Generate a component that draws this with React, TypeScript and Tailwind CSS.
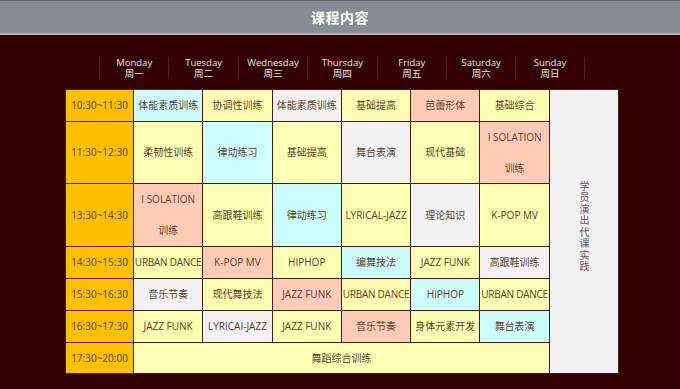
import React from "react";

const Y = "bg-[#ffffb3]";
const C = "bg-[#ccffff]";
const G = "bg-[#f2f2f2]";
const P = "bg-[#ffccb8]";

type Cell = { bg: string; text: React.ReactNode; tight?: boolean };

const days = [
  ["Monday", "周一"],
  ["Tuesday", "周二"],
  ["Wednesday", "周三"],
  ["Thursday", "周四"],
  ["Friday", "周五"],
  ["Saturday", "周六"],
  ["Sunday", "周日"],
];

const isolation = (
  <>
    I SOLATION
    <br />
    训练
  </>
);

const rows: { time: string; lead: string; cells: Cell[] }[] = [
  {
    time: "10:30~11:30",
    lead: "leading-[31px]",
    cells: [
      { bg: C, text: "体能素质训练" },
      { bg: Y, text: "协调性训练" },
      { bg: G, text: "体能素质训练" },
      { bg: Y, text: "基础提高" },
      { bg: P, text: "芭蕾形体" },
      { bg: Y, text: "基础综合" },
    ],
  },
  {
    time: "11:30~12:30",
    lead: "leading-[30.5px]",
    cells: [
      { bg: Y, text: "柔韧性训练" },
      { bg: C, text: "律动练习" },
      { bg: Y, text: "基础提高" },
      { bg: G, text: "舞台表演" },
      { bg: Y, text: "现代基础" },
      { bg: P, text: isolation },
    ],
  },
  {
    time: "13:30~14:30",
    lead: "leading-[31px]",
    cells: [
      { bg: P, text: isolation },
      { bg: Y, text: "高跟鞋训练" },
      { bg: C, text: "律动练习" },
      { bg: Y, text: "LYRICAL-JAZZ" },
      { bg: G, text: "理论知识" },
      { bg: Y, text: "K-POP MV" },
    ],
  },
  {
    time: "14:30~15:30",
    lead: "leading-[31px]",
    cells: [
      { bg: Y, text: "URBAN DANCE", tight: true },
      { bg: P, text: "K-POP MV" },
      { bg: Y, text: "HIPHOP" },
      { bg: C, text: "编舞技法" },
      { bg: Y, text: "JAZZ FUNK" },
      { bg: G, text: "高跟鞋训练" },
    ],
  },
  {
    time: "15:30~16:30",
    lead: "leading-[31px]",
    cells: [
      { bg: G, text: "音乐节奏" },
      { bg: Y, text: "现代舞技法" },
      { bg: P, text: "JAZZ FUNK" },
      { bg: Y, text: "URBAN DANCE", tight: true },
      { bg: C, text: "HIPHOP" },
      { bg: Y, text: "URBAN DANCE", tight: true },
    ],
  },
  {
    time: "16:30~17:30",
    lead: "leading-[31px]",
    cells: [
      { bg: Y, text: "JAZZ FUNK" },
      { bg: G, text: "LYRICAI-JAZZ" },
      { bg: Y, text: "JAZZ FUNK" },
      { bg: P, text: "音乐节奏" },
      { bg: Y, text: "身体元素开发" },
      { bg: C, text: "舞台表演" },
    ],
  },
];

const td = "border border-[#4a1a14] p-0 text-center align-middle whitespace-nowrap";

export default function App() {
  return (
    <div
      className="w-[680px] h-[389px] bg-[#330000] overflow-hidden text-[#574028]"
      style={{ fontFamily: '"Open Sans", "Noto Sans CJK SC", sans-serif' }}
    >
      <div className="h-[35px] bg-[#878c94] border-t border-[#5c6169] border-b-2 border-b-[#b0b4ba] flex items-center justify-center">
        <h1 className="text-[14px] font-bold text-white tracking-[0.5px]">课程内容</h1>
      </div>

      <div className="ml-[65px] w-[553px]">
        <div className="flex pl-[34px] mt-[22px]">
          {days.map(([en, zh], i) => (
            <div
              key={en}
              className={`w-[69.4px] h-[22px] flex items-center justify-center border-l border-[#5e2020] text-[#eee6e6] ${
                i === days.length - 1 ? "border-r" : ""
              }`}
            >
              <p className="text-[9.5px] leading-[11px] text-center">
                {en}
                <br />
                {zh}
              </p>
            </div>
          ))}
        </div>

        <table className="mt-[10px] w-[553px] table-fixed border-collapse text-[10px]">
          <colgroup>
            <col className="w-[68px]" />
            {days.map((d) => (
              <col key={d[0]} className="w-[69.3px]" />
            ))}
          </colgroup>
          <tbody>
            {rows.map((row, ri) => (
              <tr key={row.time}>
                <td className={`${td} ${row.lead} bg-[#ffc000] text-[#5c3a00]`}>{row.time}</td>
                {row.cells.map((c, ci) => (
                  <td
                    key={ci}
                    className={`${td} ${row.lead} ${c.bg} ${c.tight ? "tracking-[-0.25px]" : ""}`}
                  >
                    {c.text}
                  </td>
                ))}
                {ri === 0 && (
                  <td rowSpan={7} className={`${td} ${G} text-[#6a4a5c]`}>
                    <div className="-mt-[10px] flex justify-center">
                      <span className="text-[10px] leading-[12px] tracking-[1.5px] [writing-mode:vertical-rl] [text-orientation:upright]">
                        学员演出代课实践
                      </span>
                    </div>
                  </td>
                )}
              </tr>
            ))}
            <tr>
              <td className={`${td} leading-[30px] bg-[#ffc000] text-[#5c3a00]`}>17:30~20:00</td>
              <td colSpan={6} className={`${td} leading-[30px] ${Y}`}>
                舞蹈综合训练
              </td>
            </tr>
          </tbody>
        </table>
      </div>
    </div>
  );
}
